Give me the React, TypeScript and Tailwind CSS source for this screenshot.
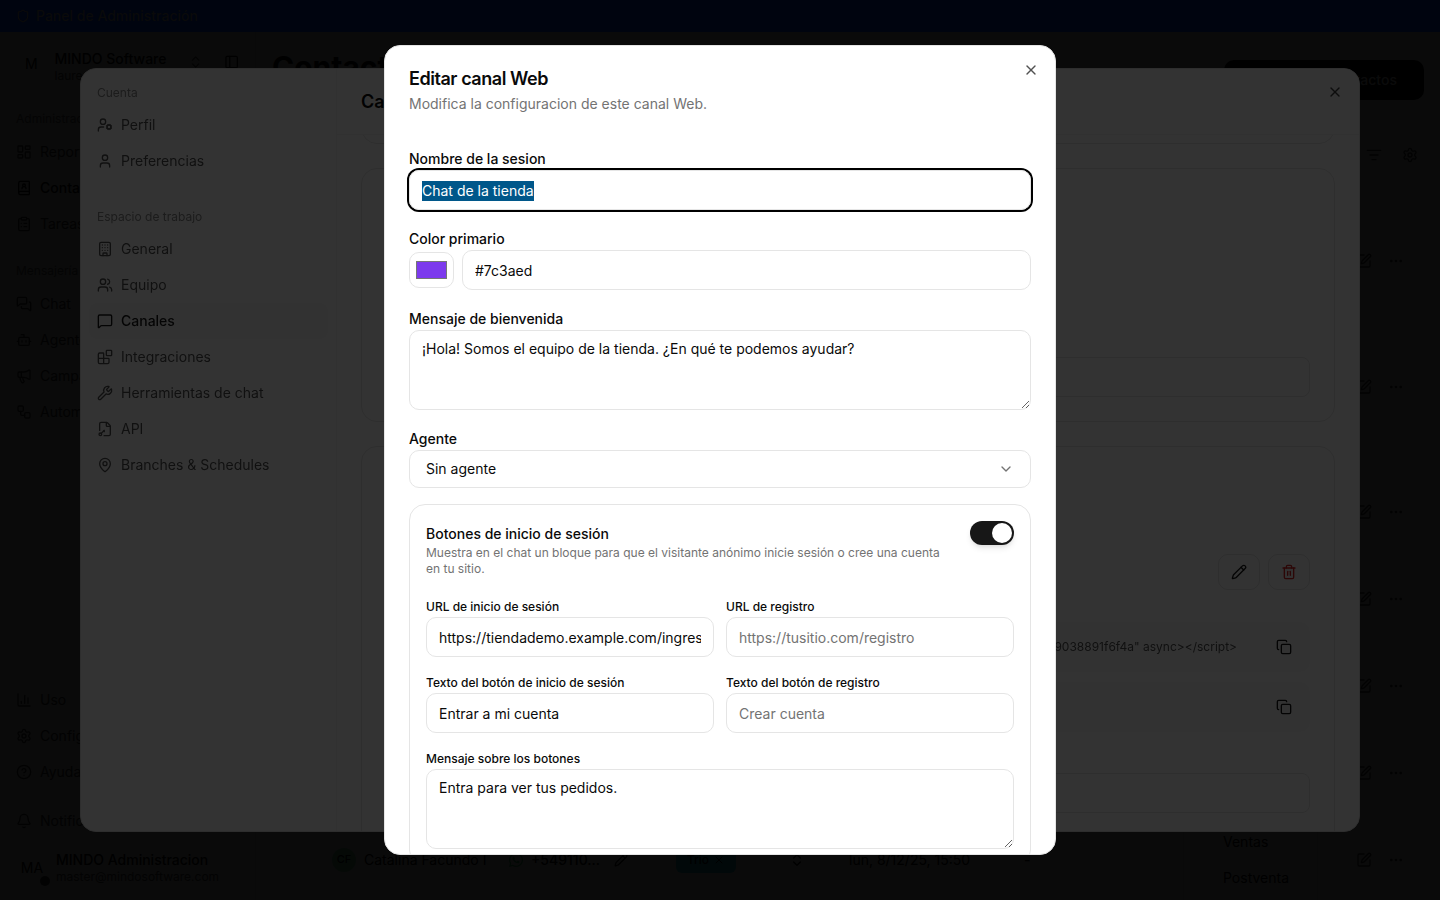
import {
  Blocks,
  Bell,
  BookUser,
  Bot,
  Building,
  ChartColumn,
  ChevronDown,
  ChevronsUpDown,
  CircleHelp,
  ClipboardList,
  Copy,
  Ellipsis,
  FileKey,
  ListFilter,
  LayoutDashboard,
  MapPin,
  Megaphone,
  MessageSquare,
  MessagesSquare,
  PanelLeft,
  Pencil,
  Settings,
  Shield,
  SquarePen,
  Trash2,
  User,
  UserCog,
  Users,
  Workflow,
  Wrench,
  X,
} from "lucide-react";
import { FaWhatsapp } from "react-icons/fa";

const topNav = [
  { label: "Reportes", icon: LayoutDashboard },
  { label: "Contactos", icon: BookUser, active: true },
  { label: "Tareas", icon: ClipboardList },
];
const messagingNav = [
  { label: "Chat", icon: MessagesSquare },
  { label: "Agentes", icon: Bot },
  { label: "Campañas", icon: Megaphone },
  { label: "Automatizaciones", icon: Workflow },
];
const bottomNav = [
  { label: "Uso", icon: ChartColumn },
  { label: "Configuración", icon: Settings },
  { label: "Ayuda", icon: CircleHelp },
];
const workspaceNav = [
  { label: "General", icon: Building },
  { label: "Equipo", icon: Users },
  { label: "Canales", icon: MessageSquare, active: true },
  { label: "Integraciones", icon: Blocks },
  { label: "Herramientas de chat", icon: Wrench },
  { label: "API", icon: FileKey },
  { label: "Branches & Schedules", icon: MapPin },
];
const rowHeights = ["h-[89px]", "h-[163px]", "h-[87px]", "h-[87px]", "h-[87px]", "h-[87px]", "h-[87px]"];

function SideItem({ label, icon: Icon, active }: { label: string; icon: typeof Bell; active?: boolean }) {
  return (
    <div className={`flex h-9 items-center gap-2 px-4 text-sm ${active ? "font-medium text-[#0a0a0a]" : "text-[#404040]"}`}>
      <Icon className="size-4 shrink-0" />
      <span className="whitespace-nowrap">{label}</span>
    </div>
  );
}

function SettingsItem({ label, icon: Icon, active }: { label: string; icon: typeof Bell; active?: boolean }) {
  return (
    <div
      className={`flex h-9 items-center gap-2 rounded-lg px-2 text-sm ${
        active ? "bg-[#fafafa] font-medium text-[#171717]" : "text-[#525252]"
      }`}
    >
      <Icon className="size-4 shrink-0" />
      {label}
    </div>
  );
}

function RowActions() {
  return (
    <div className="flex items-center gap-4 text-[#404040]">
      <SquarePen className="size-4" />
      <Ellipsis className="size-4" />
    </div>
  );
}

function ContactsPage() {
  return (
    <div className="flex h-[900px] flex-col overflow-hidden bg-white text-[#0a0a0a]">
      <div className="relative z-30 flex h-8 shrink-0 items-center gap-1.5 bg-[#00040f] pl-4 text-sm font-medium text-[#0a0a0a]">
        <Shield className="size-3.5" />
        <span>Panel de Administración</span>
      </div>
      <div className="flex min-h-0 flex-1">
        <aside className="flex w-[256px] shrink-0 flex-col border-r border-[#e5e5e5]">
          <div className="mt-2 flex h-12 items-center px-4">
            <div className="flex size-8 items-center justify-center text-sm">M</div>
            <div className="ml-2 w-[126px] whitespace-nowrap pt-[4px] leading-none">
              <div className="text-sm font-medium">MINDO Software</div>
              <div className="-mt-px text-xs text-[#525252]">laurea@mindosoftware.com</div>
            </div>
            <ChevronsUpDown className="ml-[7px] size-4 -translate-y-0.5 text-[#525252]" />
            <PanelLeft className="ml-[21px] size-4 -translate-y-0.5" />
          </div>
          <div className="mt-4 flex h-[30px] items-center px-4 text-xs text-[#737373]">Administración</div>
          {topNav.map((item) => (
            <SideItem key={item.label} {...item} />
          ))}
          <div className="mt-[14px] flex h-[30px] items-center px-4 text-xs text-[#737373]">Mensajería</div>
          {messagingNav.map((item) => (
            <SideItem key={item.label} {...item} />
          ))}
          <div className="mt-auto">
            {bottomNav.map((item) => (
              <SideItem key={item.label} {...item} />
            ))}
            <div className="mt-[13px]">
              <SideItem label="Notificaciones" icon={Bell} />
            </div>
            <div className="relative mb-2 mt-[5px] flex h-12 items-center px-4">
              <div className="flex size-8 items-center justify-center text-sm">MA</div>
              <div className="ml-2">
                <div className="text-sm font-medium leading-[18px]">MINDO Administracion</div>
                <div className="text-xs leading-4 text-[#525252]">master@mindosoftware.com</div>
              </div>
              <span className="absolute left-[40px] top-[32px] size-[10px] rounded-full bg-[#404040]" />
            </div>
          </div>
        </aside>

        <main className="relative min-w-0 flex-1">
          <div className="flex items-start justify-between pl-4 pr-4 pt-[17px]">
            <h1 className="text-3xl font-bold leading-9">Contactos</h1>
            <button className="mt-[11px] flex h-10 w-[200px] items-center justify-end rounded-[10px] bg-black pr-[27px] text-sm font-medium text-white">
              Importar contactos
            </button>
          </div>
          <div className="mt-[37px] flex h-9 items-center justify-end gap-5 pr-[22px] text-[#404040]">
            <ListFilter className="size-4" />
            <Settings className="size-4" />
          </div>
          <div className="mt-[43.5px]">
            {rowHeights.map((height, i) => (
              <div key={i} className={`flex items-center justify-end pr-9 ${height}`}>
                {i === 6 && (
                  <div className="mr-auto flex items-center pl-[76px] text-sm font-medium text-black">
                    <span className="flex size-6 items-center justify-center rounded-full bg-[#86efac] text-[11px]">CF</span>
                    <span className="ml-2 w-[144px] font-normal">Catalina Facundo I</span>
                    <FaWhatsapp className="size-4 text-[#22c55e]" />
                    <span className="ml-[7px] w-[83px]">+549110...</span>
                    <Pencil className="size-3.5" />
                    <span className="ml-[48px] flex h-[26px] w-[60px] items-center justify-center gap-1 rounded-md bg-[#22d3ee] text-xs">
                      Trio
                      <X className="size-3" />
                    </span>
                    <ChevronsUpDown className="ml-[53px] size-4" />
                    <span className="ml-[44px] w-[175px] font-normal">lun, 8/12/25, 15:50</span>
                    <span>-</span>
                  </div>
                )}
                <RowActions />
              </div>
            ))}
          </div>
          <div className="absolute left-[927px] top-[660px] flex h-[260px] w-[135px] flex-col justify-end rounded-lg border border-[#e5e5e5] bg-white pb-[55px] pl-[39px] text-sm">
            <div className="flex h-9 items-center">Ventas</div>
            <div className="flex h-9 items-center">Postventa</div>
          </div>
        </main>
      </div>
    </div>
  );
}

function ChannelsSettings() {
  return (
    <div className="fixed inset-0 z-10 flex items-center justify-center bg-black/80">
      <div className="flex h-[764px] w-[1280px] overflow-hidden rounded-2xl border border-[#e5e5e5] bg-white">
        <nav className="w-64 shrink-0 border-r border-[#f5f5f5] p-2">
          <div className="flex h-[30px] items-center px-2 pt-0.5 text-xs text-[#8a8a8a]">Cuenta</div>
          <SettingsItem label="Perfil" icon={UserCog} />
          <SettingsItem label="Preferencias" icon={User} />
          <div className="mt-[22px] flex h-[30px] items-center px-2 pt-0.5 text-xs text-[#8a8a8a]">Espacio de trabajo</div>
          {workspaceNav.map((item) => (
            <SettingsItem key={item.label} {...item} />
          ))}
        </nav>
        <div className="flex min-w-0 flex-1 flex-col">
          <div className="relative z-10 flex h-[66px] shrink-0 items-center border-b border-[#f5f5f5] bg-white pl-6">
            <h2 className="text-lg font-semibold text-[#0a0a0a]">Canales</h2>
            <X className="absolute right-4 top-[15px] size-4 text-[#404040]" />
          </div>
          <div className="min-h-0 flex-1 overflow-hidden px-6">
            <div className="-mt-6 h-[33px] rounded-2xl border border-[#e5e5e5]" />
            <div className="mt-6 flex h-[254px] flex-col justify-end rounded-2xl border border-[#e5e5e5] px-6 pb-6">
              <div className="h-10 rounded-lg border border-[#e5e5e5]" />
            </div>
            <div className="mt-6 h-[500px] rounded-2xl border border-[#e5e5e5] px-6 pt-[107px]">
              <div className="flex justify-end gap-2">
                <div className="flex h-9 w-[42px] items-center justify-center rounded-[10px] border border-[#e5e5e5] text-[#171717]">
                  <Pencil className="size-4" />
                </div>
                <div className="flex h-9 w-[42px] items-center justify-center rounded-[10px] border border-[#e5e5e5] text-[#dc2626]">
                  <Trash2 className="size-4" />
                </div>
              </div>
              <div className="mt-[32px] flex h-[50px] items-center justify-end rounded-[10px] bg-[#fafafa] pr-[18px] text-xs text-[#525252]">
                <span>data-id="9038891f6f4a" async&gt;&lt;/script&gt;</span>
                <Copy className="ml-[39px] size-4 text-[#171717]" />
              </div>
              <div className="mt-[10px] flex h-[50px] items-center justify-end rounded-[10px] bg-[#fafafa] pr-[18px]">
                <Copy className="size-4 text-[#171717]" />
              </div>
              <div className="mt-[41px] h-10 rounded-lg border border-[#e5e5e5]" />
            </div>
          </div>
        </div>
      </div>
    </div>
  );
}

const inputClass =
  "h-10 w-full rounded-[10px] border border-[#e5e5e5] bg-white px-3 text-sm text-[#0a0a0a] outline-none placeholder:text-[#737373]";

function SmallField({ label, value, placeholder }: { label: string; value?: string; placeholder?: string }) {
  return (
    <div>
      <label className="mb-1 block text-xs font-medium leading-3 text-[#0a0a0a]">{label}</label>
      <input className={inputClass} defaultValue={value} placeholder={placeholder} />
    </div>
  );
}

function EditWebChannel() {
  return (
    <div className="fixed inset-0 z-20 flex items-center justify-center bg-black/80">
      <div className="relative h-[810px] w-[672px] overflow-hidden rounded-2xl border border-[#e5e5e5] bg-white p-6">
        <button className="absolute right-[16px] top-[16px] text-[#525252]">
          <X className="size-4" />
        </button>
        <h2 className="text-lg font-semibold leading-[18px] tracking-tight text-[#0a0a0a]">Editar canal Web</h2>
        <p className="mt-1.5 text-sm text-[#737373]">Modifica la configuracion de este canal Web.</p>

        <label className="mt-[38px] block text-sm font-medium leading-[14px] text-[#0a0a0a]">Nombre de la sesion</label>
        <div className="mt-1 flex h-10 items-center rounded-[10px] border border-[#e5e5e5] px-3 pt-0.5 text-sm ring-2 ring-black">
          <span className="bg-[#00578a] text-white">Chat de la tienda</span>
        </div>

        <label className="mt-[22px] block text-sm font-medium leading-[14px] text-[#0a0a0a]">Color primario</label>
        <div className="mt-1 flex gap-2">
          <div className="mt-[2px] flex h-9 w-[45px] shrink-0 items-center justify-center rounded-[10px] border border-[#e5e5e5]">
            <span className="h-[18px] w-[31px] border border-[#767676] bg-[#7c3aed]" />
          </div>
          <input className={inputClass} defaultValue="#7c3aed" />
        </div>

        <label className="mt-[22px] block text-sm font-medium leading-[14px] text-[#0a0a0a]">Mensaje de bienvenida</label>
        <textarea
          className="mt-1 block h-20 w-full rounded-[10px] border border-[#e5e5e5] px-3 py-2 text-sm text-[#0a0a0a] outline-none"
          defaultValue="¡Hola! Somos el equipo de la tienda. ¿En qué te podemos ayudar?"
        />

        <label className="mt-[22px] block text-sm font-medium leading-[14px] text-[#0a0a0a]">Agente</label>
        <div className="mt-1 flex h-[38px] items-center justify-between rounded-[10px] border border-[#e5e5e5] pl-4 pr-4 text-sm text-[#0a0a0a]">
          Sin agente
          <ChevronDown className="size-4 text-[#737373]" />
        </div>

        <div className="mt-4 rounded-2xl border border-[#e5e5e5] p-4">
          <div className="flex items-start justify-between">
            <div className="w-[520px] pt-[3px]">
              <div className="text-sm font-medium text-[#0a0a0a]">Botones de inicio de sesión</div>
              <p className="mt-[1px] text-xs text-[#737373]">
                Muestra en el chat un bloque para que el visitante anónimo inicie sesión o cree una cuenta en tu sitio.
              </p>
            </div>
            <div className="flex h-6 w-11 items-center justify-end rounded-full bg-[#171717] pr-[2px] shadow-md">
              <span className="size-5 rounded-full bg-white" />
            </div>
          </div>
          <div className="mt-6 grid grid-cols-2 gap-x-3 gap-y-5">
            <SmallField label="URL de inicio de sesión" value="https://tiendademo.example.com/ingresar" />
            <SmallField label="URL de registro" placeholder="https://tusitio.com/registro" />
            <SmallField label="Texto del botón de inicio de sesión" value="Entrar a mi cuenta" />
            <SmallField label="Texto del botón de registro" placeholder="Crear cuenta" />
          </div>
          <label className="mb-1 mt-5 block text-xs font-medium leading-3 text-[#0a0a0a]">Mensaje sobre los botones</label>
          <textarea
            className="block h-20 w-full rounded-[10px] border border-[#e5e5e5] px-3 py-2 text-sm text-[#0a0a0a] outline-none"
            defaultValue="Entra para ver tus pedidos."
          />
        </div>
      </div>
    </div>
  );
}

export default function App() {
  return (
    <div className="font-[Inter,sans-serif]">
      <ContactsPage />
      <ChannelsSettings />
      <EditWebChannel />
    </div>
  );
}
